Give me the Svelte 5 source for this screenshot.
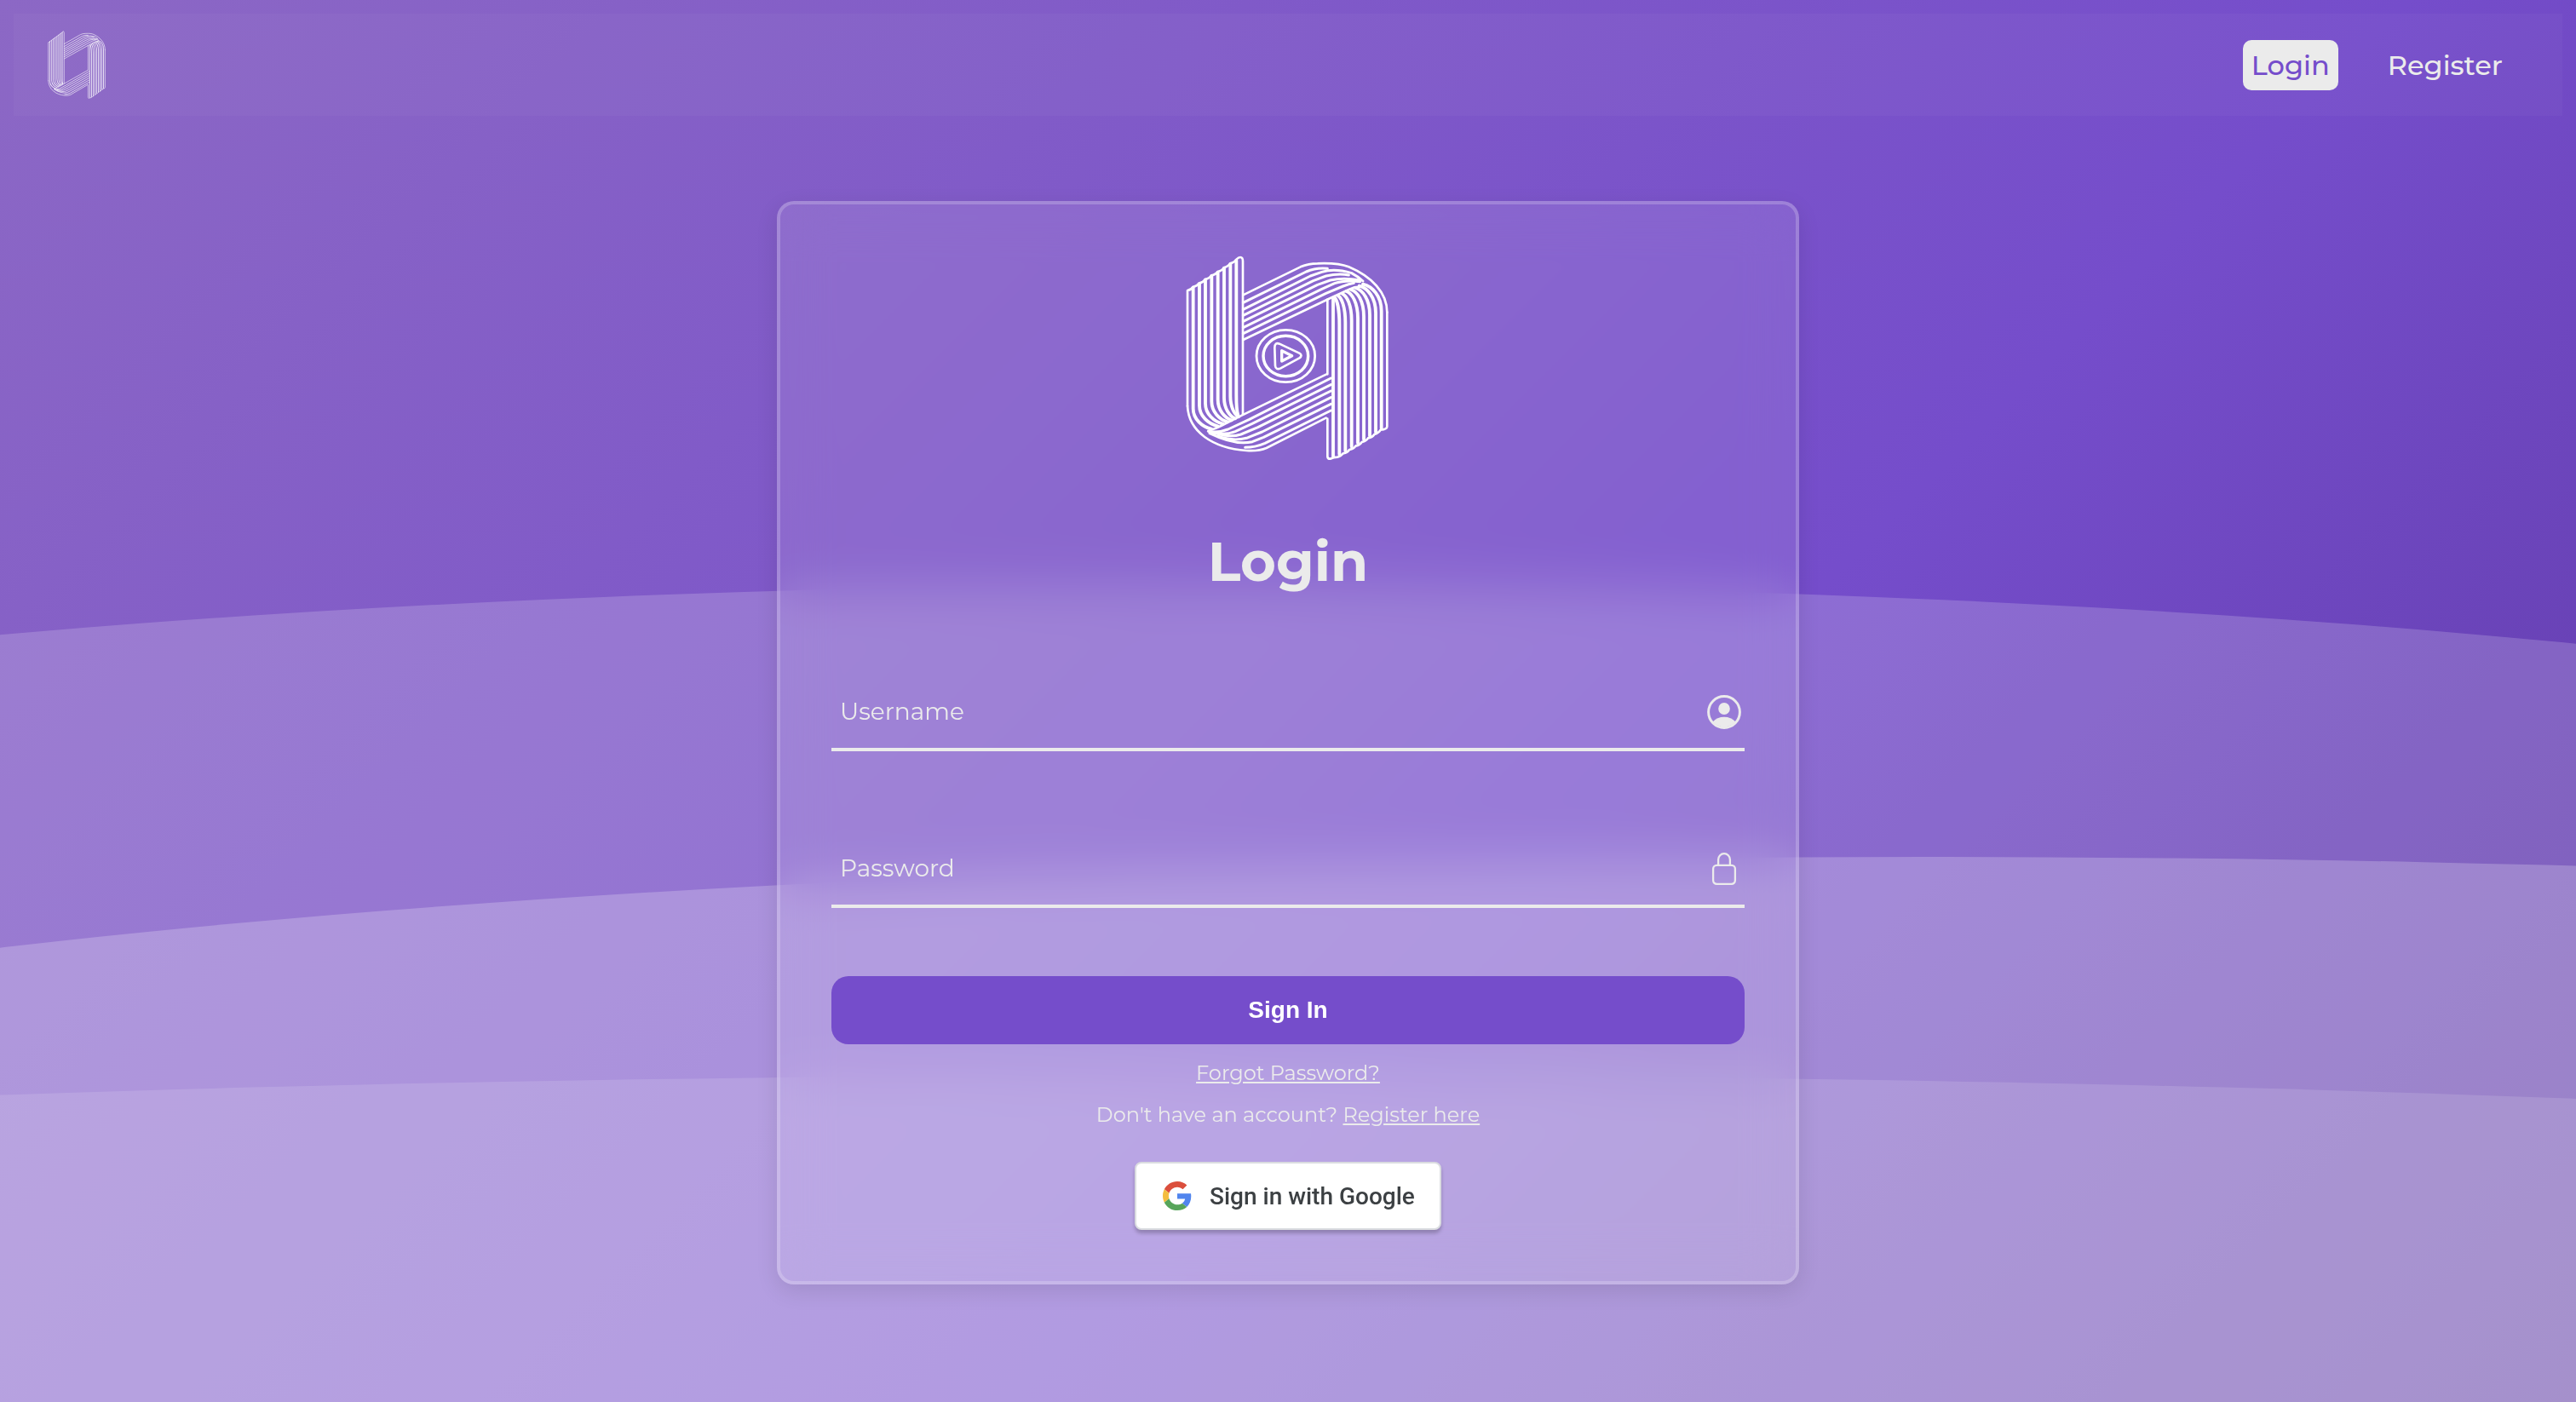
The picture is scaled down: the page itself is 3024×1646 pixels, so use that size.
<script>
  const navLinks = [
    { label: 'Login', active: true },
    { label: 'Register', active: false }
  ];

  // Vertical ribbons of the left half: x, top, and where they tuck under the fold.
  const leftBars = [
    [92, 172, 156, 671],
    [114, 160, 178, 661],
    [135, 145, 196, 653],
    [157, 132, 213, 646],
    [179, 119, 227, 640],
    [201, 104, 240, 634],
    [223, 90, 252, 628],
    [244, 77, 250, 622]
  ];
  // Vertical ribbons of the right half: x, bottom, and where they leave the fold.
  const rightBars = [
    [607, 760, 590, 208],
    [628, 748, 602, 201],
    [650, 733, 617, 194],
    [672, 720, 632, 186],
    [693, 707, 648, 180],
    [714, 695, 664, 174],
    [735, 682, 677, 167],
    [755, 668, 690, 161]
  ];
</script>

{#snippet emblem(f)}
  <g fill="none" stroke="currentColor" stroke-linecap="round" stroke-linejoin="round">
    <path stroke-width={8 * f} d="M72 590V183Q86 180 91 171Q106 168 112 158Q128 154 134 144Q150 140 156 130Q172 127 178 117Q194 113 200 103Q216 98 222 88Q238 84 244 74Q252 66 258 66Q267 66 267 80V620" />
    {#each leftBars as [x, top, ex, ey]}
      <path stroke-width={11.5 * f} d={`M${x} ${top}V${ey - 72}C${x} ${ey - 35} ${(x + ex) / 2} ${ey - 8} ${ex} ${ey}`} />
    {/each}
    <path stroke-width={8 * f} d="M560 479L265 622L190 660Q170 670 150 676" />
    <path stroke-width={9 * f} d="M577 492L290 637L215 672Q180 686 145 679" />
    <path stroke-width={9 * f} d="M577 515L300 652L240 680Q205 694 150 683" />
    <path stroke-width={9 * f} d="M577 537L320 665L260 690Q225 702 178 688" />
    <path stroke-width={9 * f} d="M577 560L335 681L280 703Q230 715 180 696" />
    <path stroke-width={9 * f} d="M577 583L340 700L300 716Q240 730 150 686" />
    <path stroke-width={9 * f} d="M577 606L345 721Q310 736 275 736" />
    <path stroke-width={8 * f} d="M560 632L350 738Q322 750 280 747C160 738 76 680 72 590" />
    <path stroke-width={8 * f} d="M565 215V478M565 635V768Q566 777 576 776Q586 770 600 770Q612 768 620 757Q636 754 642 744Q658 740 664 731Q680 727 686 717Q702 713 708 703Q724 700 730 690Q746 685 752 674Q775 672 775 662V260" />
    <path stroke-width={11.5 * f} d="M585 212V768" />
    {#each rightBars as [x, bottom, sx, sy]}
      <path stroke-width={11.5 * f} d={`M${sx} ${sy}C${(x + sx) / 2} ${sy + 8} ${x} ${sy + 40} ${x} ${sy + 95}V${bottom}`} />
    {/each}
    <path stroke-width={8 * f} d="M268 357L575 210L640 180Q660 170 680 170" />
    <path stroke-width={9 * f} d="M268 335L560 193L620 168Q640 160 658 157" />
    <path stroke-width={9 * f} d="M268 314L545 178L590 158Q625 146 680 152" />
    <path stroke-width={9 * f} d="M268 292L530 163L575 147Q620 136 680 147" />
    <path stroke-width={9 * f} d="M268 271L515 149L560 132Q605 122 640 129" />
    <path stroke-width={9 * f} d="M268 250L505 132L545 118Q590 104 650 122Q672 134 690 150" />
    <path stroke-width={9 * f} d="M268 226L490 117Q525 102 565 106" />
    <path stroke-width={8 * f} d="M268 199L470 100Q498 88 530 88C580 86 610 88 640 100C720 134 775 190 775 260" />
  </g>
{/snippet}

<div class="page">
  <div class="wave wave-back"></div>
  <div class="wave wave-mid"></div>
  <div class="wave wave-front"></div>

  <nav class="navbar">
    <svg class="brand" viewBox="64 58 718 724" preserveAspectRatio="none" aria-hidden="true">
      {@render emblem(0.8)}
    </svg>
    <div class="links">
      {#each navLinks as link}
        <a class="link" class:active={link.active} href="#{link.label}">{link.label}</a>
      {/each}
    </div>
  </nav>

  <main class="card">
    <svg class="logo" viewBox="0 0 852 840" aria-hidden="true">
      {@render emblem(1)}
      <g fill="none" stroke="currentColor" stroke-linejoin="round">
        <ellipse cx="418" cy="414" rx="103" ry="92" stroke-width="8.5" />
        <ellipse cx="418" cy="414" rx="79" ry="71" stroke-width="10.5" />
        <path stroke-width="8" d="M379 385Q379 365 396 371L466 404Q479 412 466 421L400 457Q383 465 381 448Z" />
        <path stroke-width="10" d="M404 395V432L440 413Z" />
      </g>
    </svg>

    <h1>Login</h1>

    <label class="field">
      <span>Username</span>
      <svg viewBox="0 0 40 40" aria-hidden="true">
        <circle cx="20" cy="20" r="18.4" fill="none" stroke="currentColor" stroke-width="3" />
        <ellipse cx="20" cy="16" rx="6.8" ry="7.1" fill="currentColor" />
        <path d="M6.6 31.4C10 27.6 14.5 25.7 20 25.7S30 27.6 33.4 31.4A18.4 18.4 0 0 1 6.6 31.4Z" fill="currentColor" />
      </svg>
    </label>

    <label class="field second">
      <span>Password</span>
      <svg viewBox="0 0 40 40" aria-hidden="true">
        <g fill="none" stroke="currentColor" stroke-width="2.3">
          <rect x="7.1" y="15.8" width="25.8" height="22" rx="4.2" />
          <path d="M13.1 15.8V9.2A6.9 7 0 0 1 26.9 9.2V15.8" />
        </g>
      </svg>
    </label>

    <button class="submit" type="button">Sign In</button>

    <p class="forgot"><a href="#forgot">Forgot Password?</a></p>
    <p class="signup">Don't have an account? <a href="#register">Register here</a></p>

    <button class="google" type="button">
      <svg viewBox="0 0 48 48" aria-hidden="true">
        <path fill="#db4f3d" d="M24 9.5c3.54 0 6.71 1.22 9.21 3.6l6.85-6.85C35.9 2.38 30.47 0 24 0 14.62 0 6.51 5.38 2.56 13.22l7.98 6.19C12.43 13.72 17.74 9.5 24 9.5z" />
        <path fill="#5185ee" d="M46.98 24.55c0-1.57-.15-3.09-.38-4.55H24v9.02h12.94c-.58 2.96-2.26 5.48-4.78 7.18l7.73 6c4.51-4.18 7.09-10.36 7.09-17.65z" />
        <path fill="#f4bd3e" d="M10.53 28.59c-.48-1.45-.76-2.99-.76-4.59s.27-3.14.76-4.59l-7.98-6.19C.92 16.46 0 20.12 0 24c0 3.88.92 7.54 2.56 10.78l7.97-6.19z" />
        <path fill="#57a55a" d="M24 48c6.48 0 11.93-2.13 15.89-5.81l-7.73-6c-2.15 1.45-4.92 2.3-8.16 2.3-6.26 0-11.57-4.22-13.47-9.91l-7.98 6.19C6.51 42.62 14.62 48 24 48z" />
      </svg>
      <span>Sign in with Google</span>
    </button>
  </main>
</div>

<style>
  :global(body) {
    margin: 0;
  }

  .page {
    position: relative;
    box-sizing: border-box;
    height: 100vh;
    padding: 16px 16px 0;
    overflow: hidden;
    display: flex;
    flex-direction: column;
    align-items: center;
    color: #ebebeb;
    font-family: Montserrat, Inter, sans-serif;
    background: linear-gradient(135deg, #8c68c5 0, #754dcb 2000px, #5e39a4 3302px);
  }

  .wave {
    position: absolute;
    bottom: 0;
    width: 200%;
    border-radius: 1000% 1000% 0 0;
  }

  .wave-back {
    left: -1569px;
    height: 960px;
    background: rgba(255, 255, 255, 0.18);
  }

  .wave-mid {
    left: -769px;
    height: 640px;
    background: rgba(255, 255, 255, 0.225);
  }

  .wave-front {
    left: -1571px;
    height: 384px;
    background: rgba(255, 255, 255, 0.13);
  }

  .navbar {
    position: relative;
    box-sizing: border-box;
    align-self: stretch;
    height: 120px;
    padding: 0 60px 0 40px;
    display: flex;
    align-items: center;
    justify-content: space-between;
    background: rgba(255, 255, 255, 0.03);
  }

  .brand {
    width: 68px;
    height: 80px;
    color: #fff;
    opacity: 0.9;
  }

  .links {
    display: flex;
    gap: 48px;
  }

  .link {
    padding: 0 10px;
    line-height: 59px;
    border-radius: 10px;
    text-align: center;
    text-decoration: none;
    font-size: 32px;
    font-weight: 500;
    color: #ebebeb;
  }

  .link.active {
    color: #754dcb;
    background: #ebebeb;
  }

  .card {
    position: relative;
    box-sizing: border-box;
    width: 1200px;
    height: 1272px;
    margin-top: 100px;
    padding: 40px 60px 60px;
    display: flex;
    flex-direction: column;
    align-items: center;
    border: 4px solid rgba(255, 255, 255, 0.2);
    border-radius: 20px;
    background: rgba(255, 255, 255, 0.1);
    backdrop-filter: blur(30px);
    box-shadow: 0 8px 26px rgba(0, 0, 0, 0.1);
  }

  .logo {
    flex: none;
    width: 284px;
    height: 280px;
    color: #fff;
  }

  h1 {
    margin: 57px 0 0;
    line-height: 84px;
    font-size: 64px;
    font-weight: 700;
  }

  .field {
    align-self: stretch;
    height: 84px;
    margin-top: 93px;
    padding: 0 4px 0 10px;
    display: flex;
    align-items: center;
    justify-content: space-between;
    border-bottom: 4px solid #ebebeb;
    font-size: 28px;
  }

  .field.second {
    margin-top: 96px;
  }

  .field span {
    padding-bottom: 2px;
  }

  .field svg {
    width: 40px;
    height: 40px;
  }

  .submit {
    align-self: stretch;
    flex: none;
    height: 80px;
    margin-top: 80px;
    border: 0;
    border-radius: 20px;
    background: #754dcb;
    color: #fff;
    font: 700 28px 'Liberation Sans', Arial, sans-serif;
  }

  p {
    margin: 17px 0 0;
    line-height: 32px;
    font-size: 24px;
    white-space: nowrap;
  }

  p.forgot {
    margin-top: 18px;
  }

  p a {
    color: inherit;
  }

  .google {
    box-sizing: border-box;
    flex: none;
    width: 360px;
    height: 80px;
    margin-top: 39px;
    padding: 0 0 0 31px;
    display: flex;
    align-items: center;
    gap: 21px;
    border: 2px solid #dadce0;
    border-radius: 8px;
    background: #fff;
    color: #3c4043;
    box-shadow: 0 4px 4px rgba(0, 0, 0, 0.22);
    font: 500 28px Roboto, sans-serif;
    white-space: nowrap;
  }

  .google svg {
    width: 34px;
    height: 34px;
  }
</style>
